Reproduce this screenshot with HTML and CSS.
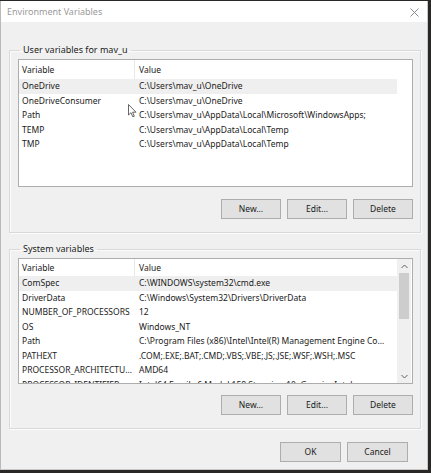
FILE: index.html
```html
<!DOCTYPE html>
<html>
<head>
<meta charset="utf-8">
<link rel="stylesheet" href="styles.css">
</head>
<body>
<div class="window">
  <div class="titlebar">
    <span class="title">Environment Variables</span>
    <svg class="close" width="9" height="9" viewBox="0 0 9 9"><path d="M0.5 0.5L8.5 8.5M8.5 0.5L0.5 8.5" stroke="#8a8a8a" stroke-width="1" fill="none"/></svg>
  </div>
  <div class="content">
    <fieldset class="group">
      <legend>User variables for mav_u</legend>
      <div class="listbox user">
        <div class="table">
          <div class="row head"><span class="c1">Variable</span><span class="c2">Value</span></div>
          <div class="row sel"><span class="c1">OneDrive</span><span class="c2">C:\Users\mav_u\OneDrive</span></div>
          <div class="row"><span class="c1">OneDriveConsumer</span><span class="c2">C:\Users\mav_u\OneDrive</span></div>
          <div class="row"><span class="c1">Path</span><span class="c2">C:\Users\mav_u\AppData\Local\Microsoft\WindowsApps;</span></div>
          <div class="row"><span class="c1">TEMP</span><span class="c2">C:\Users\mav_u\AppData\Local\Temp</span></div>
          <div class="row"><span class="c1">TMP</span><span class="c2">C:\Users\mav_u\AppData\Local\Temp</span></div>
        </div>
      </div>
      <div class="buttons">
        <button class="btn">New...</button>
        <button class="btn">Edit...</button>
        <button class="btn">Delete</button>
      </div>
    </fieldset>
    <fieldset class="group sys">
      <legend>System variables</legend>
      <div class="listbox system">
        <div class="table">
          <div class="row head"><span class="c1">Variable</span><span class="c2">Value</span></div>
          <div class="row sel"><span class="c1">ComSpec</span><span class="c2">C:\WINDOWS\system32\cmd.exe</span></div>
          <div class="row"><span class="c1">DriverData</span><span class="c2">C:\Windows\System32\Drivers\DriverData</span></div>
          <div class="row"><span class="c1">NUMBER_OF_PROCESSORS</span><span class="c2">12</span></div>
          <div class="row"><span class="c1">OS</span><span class="c2">Windows_NT</span></div>
          <div class="row"><span class="c1">Path</span><span class="c2">C:\Program Files (x86)\Intel\Intel(R) Management Engine Components\iCLS\</span></div>
          <div class="row"><span class="c1">PATHEXT</span><span class="c2">.COM;.EXE;.BAT;.CMD;.VBS;.VBE;.JS;.JSE;.WSF;.WSH;.MSC</span></div>
          <div class="row"><span class="c1">PROCESSOR_ARCHITECTURE</span><span class="c2">AMD64</span></div>
          <div class="row"><span class="c1">PROCESSOR_IDENTIFIER</span><span class="c2">Intel64 Family 6 Model 158 Stepping 10, GenuineIntel</span></div>
        </div>
        <div class="scrollbar">
          <svg class="arrow" width="7" height="5" viewBox="0 0 7 5"><path d="M0.5 4L3.5 1L6.5 4" stroke="#606060" fill="none"/></svg>
          <div class="track"><div class="thumb"></div></div>
          <svg class="arrow" width="7" height="5" viewBox="0 0 7 5"><path d="M0.5 1L3.5 4L6.5 1" stroke="#606060" fill="none"/></svg>
        </div>
      </div>
      <div class="buttons">
        <button class="btn">New...</button>
        <button class="btn">Edit...</button>
        <button class="btn">Delete</button>
      </div>
    </fieldset>
    <div class="footer">
      <button class="btn">OK</button>
      <button class="btn">Cancel</button>
    </div>
  </div>
  <svg class="cursor" width="9" height="14" viewBox="0 0 9 14"><path d="M0.5 0.5L0.5 11L3 8.7L4.8 12.8L6.3 12.2L4.6 8.2L8 8.2Z" fill="#fff" stroke="#555" stroke-width="0.9" stroke-linejoin="round"/></svg>
</div>
</body>
</html>
```
FILE: styles.css
```css
html, body {
  margin: 0;
  padding: 0;
}
body {
  background: #2a2826;
  width: 431px;
  height: 473px;
  overflow: hidden;
  font-family: "Noto Sans", "Open Sans", sans-serif;
  font-size: 8.5px;
  color: #1a1a1a;
}
.window {
  position: relative;
  margin-top: 1px;
  width: 426px;
  height: 468px;
  background: #f0f0f0;
  border-left: 1px solid #b9b9b9;
  border-right: 1px solid #c8c8c8;
  border-bottom: 1px solid #c8c8c8;
  display: flex;
  flex-direction: column;
}
.titlebar {
  height: 21px;
  background: #ffffff;
  display: flex;
  align-items: center;
  justify-content: space-between;
  padding: 0 8px 0 6px;
  flex-shrink: 0;
}
.title {
  color: #9a9a9a;
  font-size: 9px;
  line-height: 12px;
}
.close {
  display: block;
  margin-top: 1px;
}
.content {
  padding: 22px 0 0 8px;
  display: flex;
  flex-direction: column;
}
.group {
  margin: 0;
  width: 412px;
  padding: 3px 7px 13px 8px;
  border: 1px solid #d9d9d9;
  box-shadow: inset 1px 1px 0 #fbfbfb, 1px 1px 0 #fbfbfb;
  box-sizing: border-box;
  min-width: 0;
}
.group legend {
  padding: 0 3px;
  margin-left: 2px;
  line-height: 12px;
  font-size: 9px;
}
.group.sys {
  margin-top: 10px;
}
.listbox {
  display: flex;
  background: #ffffff;
  border: 1px solid #adadad;
  overflow: hidden;
}
.listbox.user {
  height: 126px;
}
.listbox.system {
  height: 124px;
}
.table {
  width: 378px;
  flex-shrink: 0;
  display: flex;
  flex-direction: column;
}
.row {
  display: grid;
  grid-template-columns: 116px 262px;
  height: 14.5px;
  line-height: 14.5px;
  white-space: nowrap;
  flex-shrink: 0;
}
.row.head {
  height: 17px;
  line-height: 17px;
}
.user .row.head {
  height: 19px;
  line-height: 19px;
}
.row.head .c1 {
  border-right: 1px solid #e8e8e8;
}
.row.sel {
  background: #efefef;
}
.c1, .c2 {
  overflow: hidden;
  text-overflow: ellipsis;
  white-space: nowrap;
}
.c1 {
  padding-left: 3px;
  padding-right: 1px;
}
.c2 {
  padding-left: 4px;
  padding-right: 8px;
}
.scrollbar {
  width: 14px;
  background: #f0f0f0;
  display: flex;
  flex-direction: column;
  align-items: center;
  padding: 5px 0 4px;
}
.track {
  flex: 1;
  width: 100%;
  padding: 4px 2px 0;
  box-sizing: border-box;
  margin-bottom: 4px;
}
.thumb {
  height: 46px;
  background: #cdcdcd;
}
.arrow {
  display: block;
}
.buttons {
  display: flex;
  justify-content: flex-end;
  gap: 6px;
  margin-top: 11px;
}
.user + .buttons {
  margin-top: 12px;
}
.btn {
  width: 60px;
  height: 20px;
  margin: 0;
  padding: 0;
  background: #e1e1e1;
  border: 1px solid #adadad;
  font-family: "Noto Sans", "Open Sans", sans-serif;
  font-size: 8.5px;
  color: #1a1a1a;
  line-height: 18px;
}
.footer {
  display: flex;
  justify-content: flex-end;
  gap: 6px;
  margin-top: 13px;
  padding-right: 19px;
}
.footer .btn {
  width: 61px;
}
.cursor {
  position: absolute;
  left: 127px;
  top: 103px;
}
```
